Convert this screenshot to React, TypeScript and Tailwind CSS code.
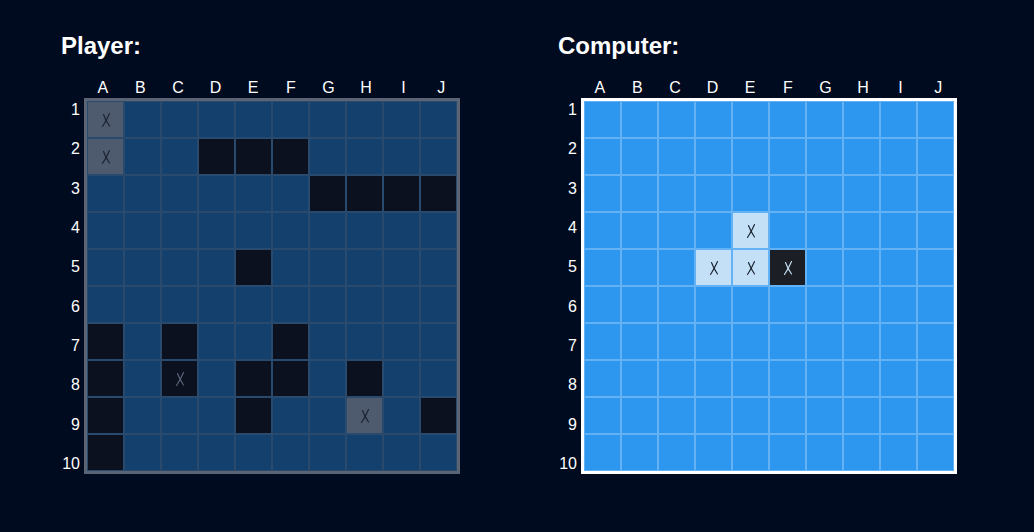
import React from 'react'

const COLS = ['A', 'B', 'C', 'D', 'E', 'F', 'G', 'H', 'I', 'J']

// . water  # ship  x hit-marker on water  * hit on ship  o miss
const playerRows = [
  'x.........',
  'x..###....',
  '......####',
  '..........',
  '....#.....',
  '..........',
  '#.#..#....',
  '#.*.##.#..',
  '#...#..x.#',
  '#.........',
]

const computerRows = [
  '..........',
  '..........',
  '..........',
  '....o.....',
  '...oo*....',
  '..........',
  '..........',
  '..........',
  '..........',
  '..........',
]

// thin hand-drawn style cross
function Mark({ className }: { className: string }) {
  return (
    <svg width="12" height="16" viewBox="0 0 12 16" fill="none" className={className}>
      <path d="M9.5 1.5 C8 5 5.5 10 2.5 14.5" stroke="currentColor" strokeWidth="1.15" strokeLinecap="round" />
      <path d="M3.5 2.5 C5 6.5 7 10.5 9.5 14" stroke="currentColor" strokeWidth="1.15" strokeLinecap="round" />
    </svg>
  )
}

function PlayerCell({ v }: { v: string }) {
  if (v === '#') return <div className="h-[37px] w-[37px] border border-[#29496d] bg-[#0c111f]" />
  if (v === 'x')
    return (
      <div className="flex h-[37px] w-[37px] items-center justify-center border border-[#29496d] bg-[#4e5a6e]">
        <Mark className="text-[#1b2230]" />
      </div>
    )
  if (v === '*')
    return (
      <div className="flex h-[37px] w-[37px] items-center justify-center border border-[#29496d] bg-[#0c111f]">
        <Mark className="text-[#5b6579]" />
      </div>
    )
  return <div className="h-[37px] w-[37px] border border-[#29496d] bg-[#13406d]" />
}

function ComputerCell({ v }: { v: string }) {
  if (v === 'o')
    return (
      <div className="flex h-[37px] w-[37px] items-center justify-center border border-[#63b2f5] bg-[#c3e0f7]">
        <Mark className="text-[#1c2430]" />
      </div>
    )
  if (v === '*')
    return (
      <div className="flex h-[37px] w-[37px] items-center justify-center border border-[#63b2f5] bg-[#1c1e25]">
        <Mark className="text-[#c8e2f7]" />
      </div>
    )
  return <div className="h-[37px] w-[37px] border border-[#63b2f5] bg-[#2d97f0]" />
}

function Board({ title, rows, computer }: { title: string; rows: string[]; computer?: boolean }) {
  return (
    <div>
      <h2 className="text-2xl font-bold leading-8">{title}</h2>
      <div className="mt-4 flex gap-1">
        {/* 行号 */}
        <div className="mt-5 flex h-[378px] w-[19px] flex-col justify-between text-right text-base leading-6">
          {rows.map((_, i) => (
            <span key={i}>{i + 1}</span>
          ))}
        </div>
        <div>
          <div className="flex h-5 w-[376px] justify-around text-base leading-5">
            {COLS.map((c) => (
              <span key={c} className="flex-1 text-center">{c}</span>
            ))}
          </div>
          <div
            className={`grid w-[376px] grid-cols-10 border-[3px] ${
              computer ? 'border-white' : 'border-[#5b6474]'
            }`}
          >
            {rows.map((r, y) =>
              r.split('').map((v, x) =>
                computer ? <ComputerCell key={`${y}-${x}`} v={v} /> : <PlayerCell key={`${y}-${x}`} v={v} />
              )
            )}
          </div>
        </div>
      </div>
    </div>
  )
}

export default function App() {
  return (
    <div className="h-screen w-full bg-[#010b1f] font-['Liberation_Sans',Arial,sans-serif] text-white">
      <div className="flex gap-[98px] pl-[61px] pt-[30px]">
        <Board title="Player:" rows={playerRows} />
        <Board title="Computer:" rows={computerRows} computer />
      </div>
    </div>
  )
}
